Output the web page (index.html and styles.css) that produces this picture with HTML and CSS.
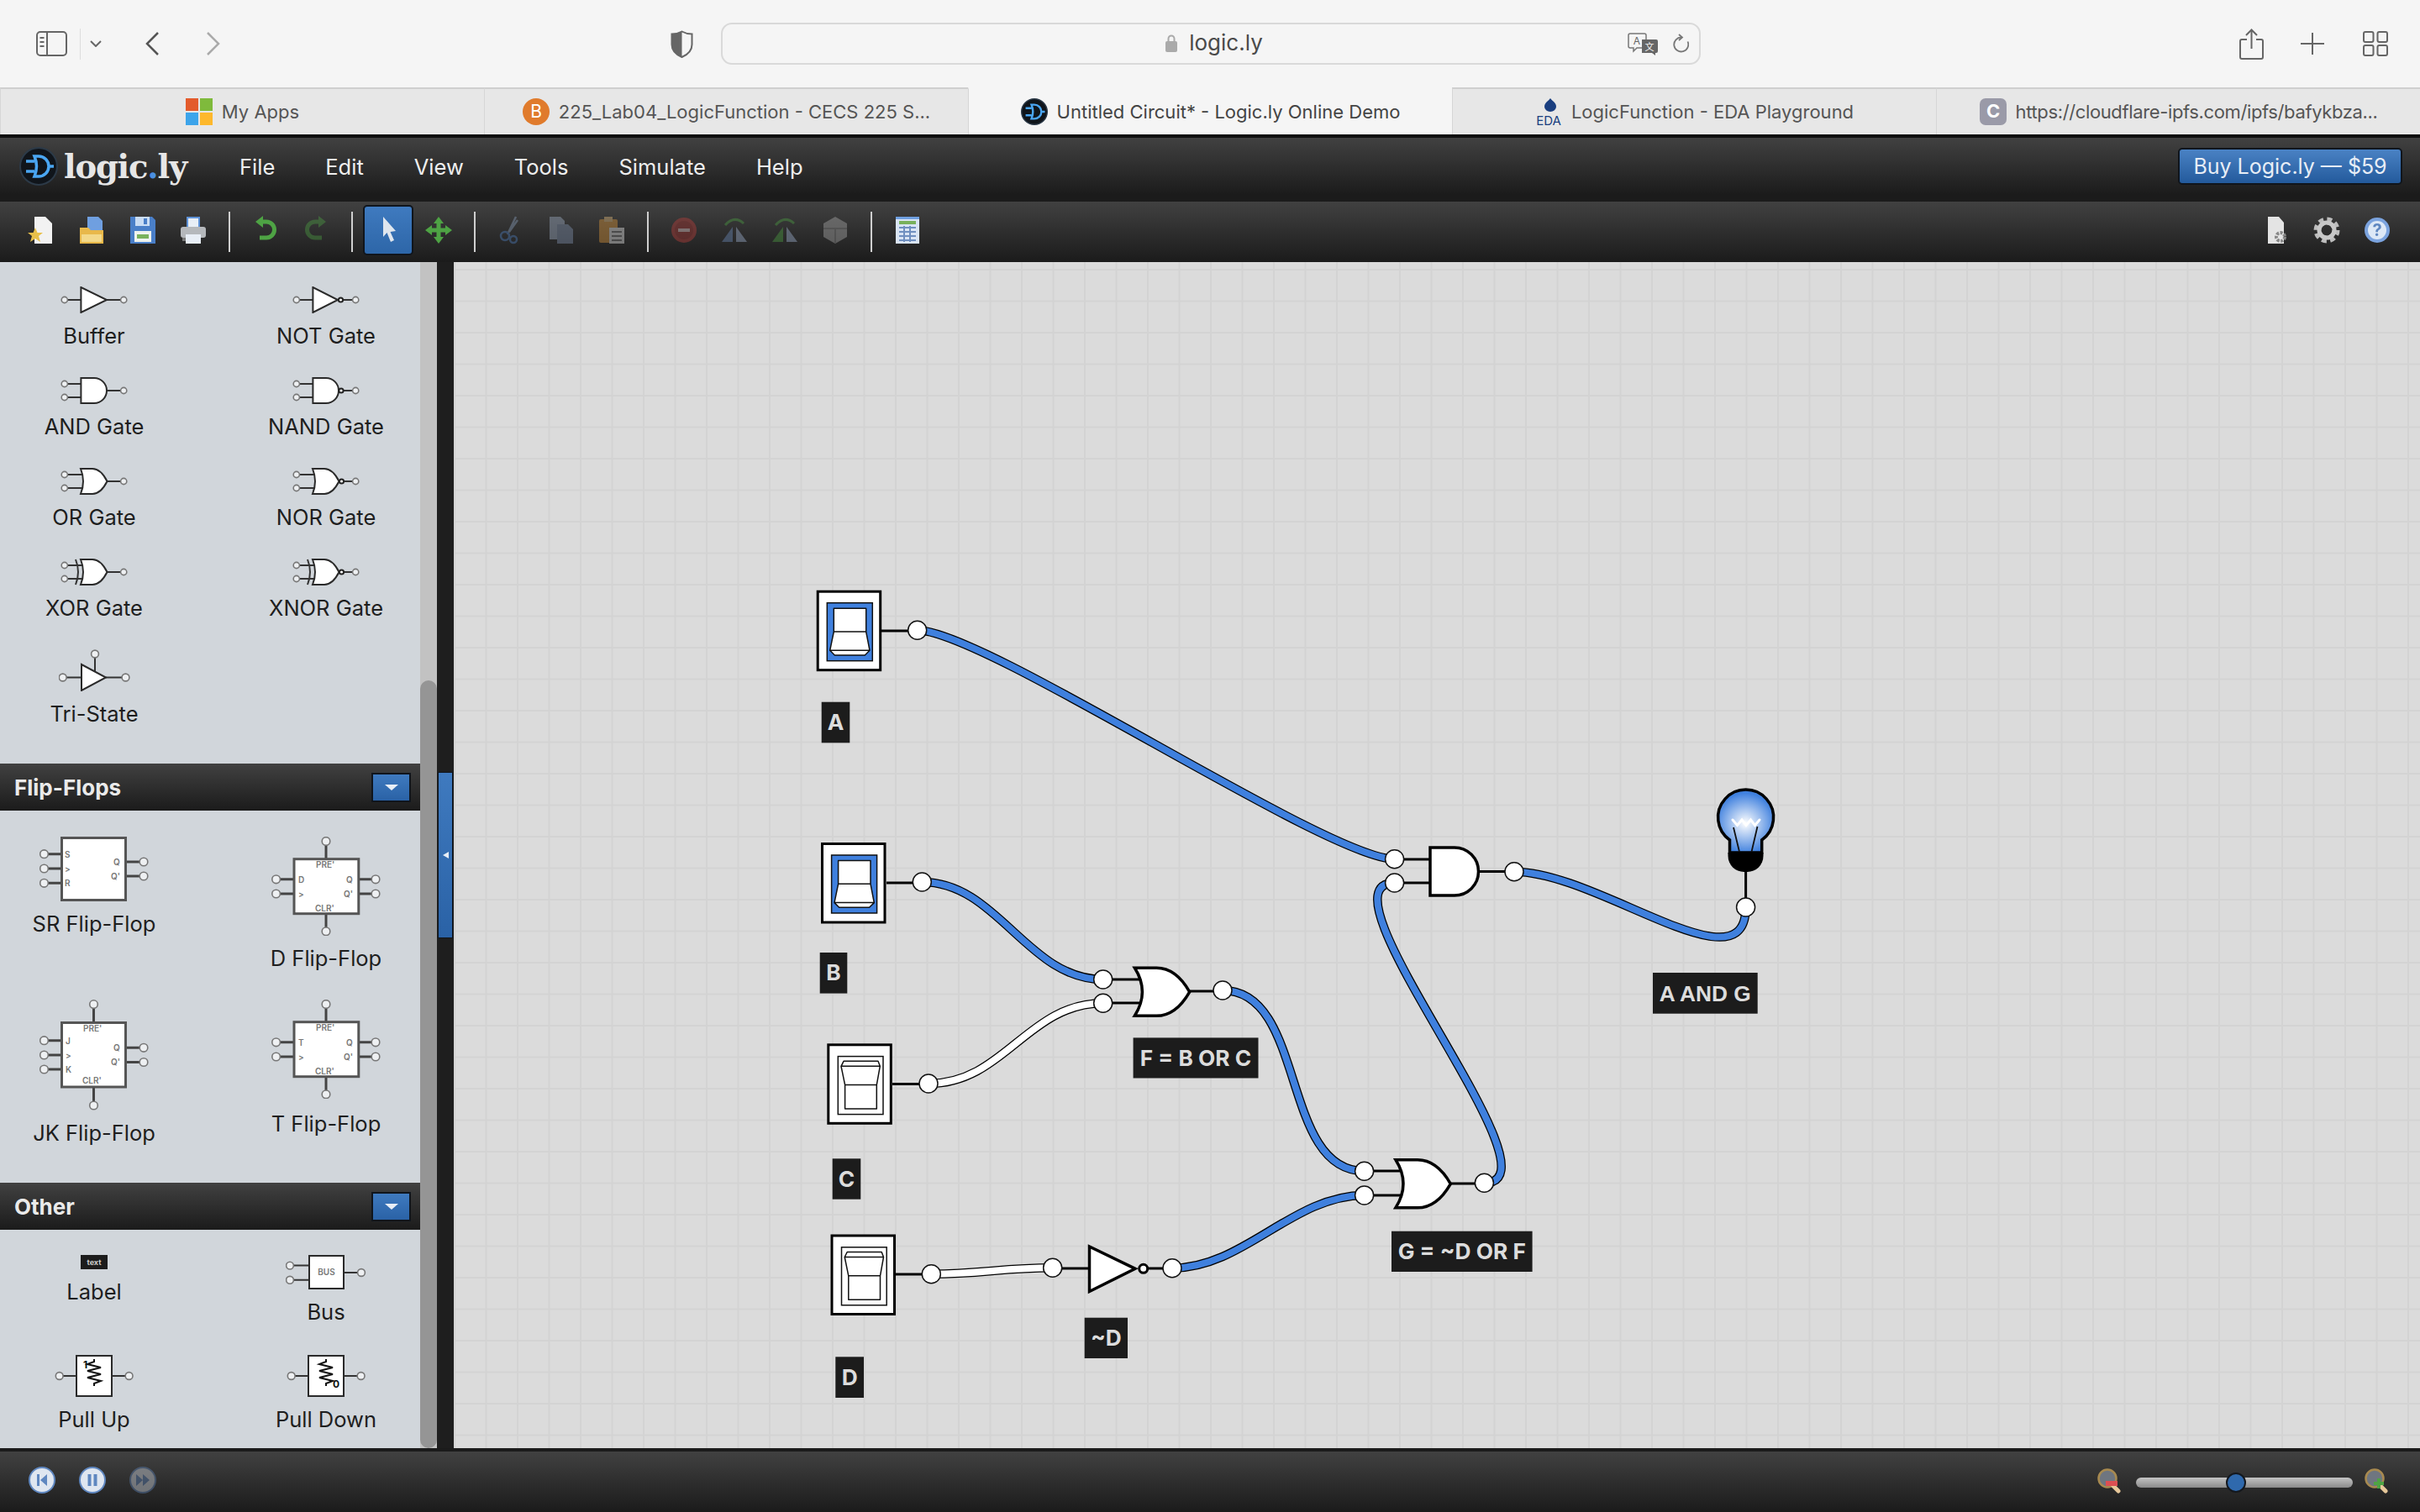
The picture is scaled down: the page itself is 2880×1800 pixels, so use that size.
FILE: index.html
```html
<!DOCTYPE html>
<html lang="en">
<head>
    <meta charset="UTF-8">
    <title>Untitled Circuit* - Logic.ly Online Demo</title>
    <link rel="stylesheet" href="styles.css">
</head>
<body>
    <svg class="defs" width="0" height="0" aria-hidden="true">
        <defs>
            <symbol id="logo-mark" viewBox="0 0 46 46">
                <circle cx="23" cy="23" r="22" fill="#10151b" stroke="#2c3a48" stroke-width="2"/>
                <path d="M8 17h10M8 29h10M18 11h5a12 12 0 0 1 0 24h-5q5-12 0-24zM35 23h6" fill="none" stroke="#4aa6f2" stroke-width="3.5"/>
            </symbol>

            <!-- palette gates -->
            <symbol id="p-buffer" viewBox="0 0 80 32">
                <path class="p-line" d="M8 16h17M55 16h16"/>
                <polygon class="p-body" points="24.4,1 24.4,31 55,16"/>
                <circle class="p-node" cx="4.8" cy="16" r="3.6"/><circle class="p-node" cx="75.2" cy="16" r="3.6"/>
            </symbol>
            <symbol id="p-not" viewBox="0 0 80 32">
                <path class="p-line" d="M8 16h17M60 16h11"/>
                <polygon class="p-body" points="24.4,1 24.4,31 54,16"/>
                <circle class="p-bub" cx="57.5" cy="16" r="2.6"/>
                <circle class="p-node" cx="4.8" cy="16" r="3.6"/><circle class="p-node" cx="75.2" cy="16" r="3.6"/>
            </symbol>
            <symbol id="p-and" viewBox="0 0 80 32">
                <path class="p-line" d="M8 8h17M8 24h17M55 16h16"/>
                <path class="p-body" d="M24.4 1H40a15 15 0 0 1 0 30H24.4z"/>
                <circle class="p-node" cx="4.8" cy="8" r="3.6"/><circle class="p-node" cx="4.8" cy="24" r="3.6"/><circle class="p-node" cx="75.2" cy="16" r="3.6"/>
            </symbol>
            <symbol id="p-nand" viewBox="0 0 80 32">
                <path class="p-line" d="M8 8h17M8 24h17M60 16h11"/>
                <path class="p-body" d="M24.4 1H40a15 15 0 0 1 0 30H24.4z"/>
                <circle class="p-bub" cx="58" cy="16" r="2.6"/>
                <circle class="p-node" cx="4.8" cy="8" r="3.6"/><circle class="p-node" cx="4.8" cy="24" r="3.6"/><circle class="p-node" cx="75.2" cy="16" r="3.6"/>
            </symbol>
            <symbol id="p-or" viewBox="0 0 80 32">
                <path class="p-line" d="M8 8h19M8 24h19M55 16h16"/>
                <path class="p-body" d="M24 1H38C46 1 52 9 55.5 16 52 23 46 31 38 31H24Q30 16 24 1z"/>
                <circle class="p-node" cx="4.8" cy="8" r="3.6"/><circle class="p-node" cx="4.8" cy="24" r="3.6"/><circle class="p-node" cx="75.2" cy="16" r="3.6"/>
            </symbol>
            <symbol id="p-nor" viewBox="0 0 80 32">
                <path class="p-line" d="M8 8h19M8 24h19M60 16h11"/>
                <path class="p-body" d="M24 1H38C46 1 52 9 55.5 16 52 23 46 31 38 31H24Q30 16 24 1z"/>
                <circle class="p-bub" cx="58.5" cy="16" r="2.6"/>
                <circle class="p-node" cx="4.8" cy="8" r="3.6"/><circle class="p-node" cx="4.8" cy="24" r="3.6"/><circle class="p-node" cx="75.2" cy="16" r="3.6"/>
            </symbol>
            <symbol id="p-xor" viewBox="0 0 80 32">
                <path class="p-line" d="M8 8h19M8 24h19M55 16h16M18 1Q24 16 18 31"/>
                <path class="p-body" d="M24 1H38C46 1 52 9 55.5 16 52 23 46 31 38 31H24Q30 16 24 1z"/>
                <circle class="p-node" cx="4.8" cy="8" r="3.6"/><circle class="p-node" cx="4.8" cy="24" r="3.6"/><circle class="p-node" cx="75.2" cy="16" r="3.6"/>
            </symbol>
            <symbol id="p-xnor" viewBox="0 0 80 32">
                <path class="p-line" d="M8 8h19M8 24h19M60 16h11M18 1Q24 16 18 31"/>
                <path class="p-body" d="M24 1H38C46 1 52 9 55.5 16 52 23 46 31 38 31H24Q30 16 24 1z"/>
                <circle class="p-bub" cx="58.5" cy="16" r="2.6"/>
                <circle class="p-node" cx="4.8" cy="8" r="3.6"/><circle class="p-node" cx="4.8" cy="24" r="3.6"/><circle class="p-node" cx="75.2" cy="16" r="3.6"/>
            </symbol>

            <!-- circuit parts -->
            <g id="gate-or"><path class="part" d="M0 0H26C45 0 57 14 65.3 28.5 57 43 45 57 26 57H0Q18 28.5 0 0z"/></g>
            <g id="gate-and"><path class="part" d="M0 0H29a28.5 28.5 0 0 1 0 57H0z"/></g>
            <g id="switch-on">
                <rect class="sw-frame" x="1.5" y="1.5" width="74.500" height="93.500"/>
                <rect class="sw-well-on" x="12.600" y="15" width="54" height="69"/>
                <path class="sw-paddle" d="M20.600 21.600H59V49.300H20.600zM20.600 49.300 16 71.600H63.300L59 49.300zM16 71.600l5.600 5.700H57.600l5.700-5.700z"/>
            </g>
            <g id="switch-off">
                <rect class="sw-frame" x="1.5" y="1.5" width="74.500" height="93.500"/>
                <rect class="sw-well-off" x="13" y="15.300" width="53.700" height="69"/>
                <path class="sw-paddle" d="M19.700 21H60.700L63 27H16.700zM16.700 27 21.300 49.300H59L63 27zM21.300 49.300H59V77.700H21.300z"/>
            </g>
        </defs>
    </svg>

    <header class="browser-bar">
        <svg class="bb-sidebar" viewBox="0 0 37 30"><rect x="1" y="1" width="35" height="28" rx="4" class="bb-stroke"/><path d="M13 1v28" class="bb-stroke"/><path d="M4.500 8h5M4.500 13h5M4.500 18h5" class="bb-stroke"/></svg>
        <span class="bb-divider"></span>
        <svg class="bb-chevron" viewBox="0 0 16 8"><path d="M2 1l6 6 6-6" class="bb-stroke"/></svg>
        <svg class="bb-back" viewBox="0 0 18 28"><path d="M16 1L3 14l13 13" class="bb-stroke-wide"/></svg>
        <svg class="bb-forward" viewBox="0 0 18 28"><path d="M2 1l13 13L2 27" class="bb-stroke-dim"/></svg>
        <svg class="bb-shield" viewBox="0 0 27 33"><path d="M13.500 1.500C9 4 5 4.500 1.500 4.500V17c0 7 5 12 12 15 7-3 12-8 12-15V4.500C22 4.500 18 4 13.500 1.500z" class="bb-stroke"/><path d="M13.500 1.500C9 4 5 4.500 1.500 4.500V17c0 7 5 12 12 15z" fill="#666"/></svg>
        <div class="address">
            <span></span>
            <div class="address-host">
                <svg class="lock" viewBox="0 0 14 22"><path d="M3.500 10V6a3.500 3.500 0 0 1 7 0v4" fill="none" stroke="#aaa" stroke-width="2"/><rect y="9" width="14" height="13" rx="2" fill="#aaa"/></svg>
                <span>logic.ly</span>
            </div>
            <div class="address-actions">
                <svg class="translate" viewBox="0 0 37 27"><path d="M3 1h17a2 2 0 0 1 2 2v13a2 2 0 0 1-2 2h-9l-4 4v-4H3a2 2 0 0 1-2-2V3a2 2 0 0 1 2-2z" fill="#f5f5f5" stroke="#777" stroke-width="1.500"/><path d="M17 8h17a2 2 0 0 1 2 2v12a2 2 0 0 1-2 2h-1v3l-4-3H17z" fill="#666"/><text x="11" y="14" class="translate-a">A</text><text x="26" y="21" class="translate-b">文</text></svg>
                <svg class="reload" viewBox="0 0 21 24"><path d="M12 4.500a8.500 8.500 0 1 0 7.500 5" fill="none" stroke="#777" stroke-width="1.800"/><path d="M9 1l4 3.500L9 8" fill="none" stroke="#777" stroke-width="1.800"/></svg>
            </div>
        </div>
        <svg class="bb-share" viewBox="0 0 29 37"><path d="M9 13H3a2 2 0 0 0-2 2v19a2 2 0 0 0 2 2h23a2 2 0 0 0 2-2V15a2 2 0 0 0-2-2h-6M14.500 24V2M8 8l6.500-6.500L21 8" class="bb-stroke"/></svg>
        <svg class="bb-plus" viewBox="0 0 28 26"><path d="M14 0v26M0 13h28" class="bb-stroke"/></svg>
        <svg class="bb-grid" viewBox="0 0 30 30"><rect x="1" y="1" width="11.500" height="12" rx="2" class="bb-stroke"/><rect x="17.500" y="1" width="11.500" height="12" rx="2" class="bb-stroke"/><rect x="1" y="17" width="11.500" height="12" rx="2" class="bb-stroke"/><rect x="17.500" y="17" width="11.500" height="12" rx="2" class="bb-stroke"/></svg>
    </header>

    <nav class="tabs">
        <div class="tab">
            <svg class="favicon" viewBox="0 0 32 32"><rect width="15" height="15" fill="#e35b2c"/><rect x="17" width="15" height="15" fill="#7fba3c"/><rect y="17" width="15" height="15" fill="#3da4ea"/><rect x="17" y="17" width="15" height="15" fill="#fdb82c"/></svg>
            <span>My Apps</span>
        </div>
        <div class="tab">
            <svg class="favicon" viewBox="0 0 32 32"><circle cx="16" cy="16" r="16" fill="#e07b2c"/><text x="16" y="23" class="favicon-b">B</text></svg>
            <span>225_Lab04_LogicFunction - CECS 225 S...</span>
        </div>
        <div class="tab tab-active">
            <svg class="favicon"><use href="#logo-mark"/></svg>
            <span>Untitled Circuit* - Logic.ly Online Demo</span>
        </div>
        <div class="tab">
            <svg class="favicon" viewBox="0 0 32 32"><path d="M18 0c2 3 7 5 7 10a7 6 0 0 1-14 0c0-5 5-7 7-10z" fill="#1a3f80"/><text x="16" y="32" class="favicon-eda">EDA</text></svg>
            <span>LogicFunction - EDA Playground</span>
        </div>
        <div class="tab tab-url">
            <svg class="favicon" viewBox="0 0 32 32"><rect width="32" height="32" rx="7" fill="#9a9aa8"/><text x="16" y="23" class="favicon-c">C</text></svg>
            <span>https://cloudflare-ipfs.com/ipfs/bafykbza...</span>
        </div>
    </nav>

    <div class="app-menu">
        <svg class="logo-mark"><use href="#logo-mark"/></svg>
        <span class="logo-text">logic<span class="logo-dot">.</span>ly</span>
        <ul class="menu">
            <li>File</li>
            <li>Edit</li>
            <li>View</li>
            <li>Tools</li>
            <li>Simulate</li>
            <li>Help</li>
        </ul>
        <button class="buy">Buy Logic.ly — $59</button>
    </div>

    <div class="app-toolbar">
        <div class="tool"><svg viewBox="0 0 32 32"><path d="M7 0h13l8 8v24H7z" fill="#f2f2f2"/><polygon points="8,13 10.500,19 17,19 12,23 14,30 8,26 2,30 4,23 -1,19 5.500,19" fill="#e8c04a"/></svg></div>
        <div class="tool"><svg viewBox="0 0 32 32"><path d="M10 0h13l5 5v18H10z" fill="#6f9fe0"/><path d="M1 13h10l3 3h15v16H1z" fill="#e8b84a"/><rect x="3" y="21" width="24" height="9" fill="#f3d98a"/></svg></div>
        <div class="tool"><svg viewBox="0 0 32 32"><path d="M1 0h26l4 4v28H1z" fill="#4a7fc8"/><rect x="7" y="0" width="17" height="11" fill="#c9dcf4"/><rect x="17" y="2" width="4" height="7" fill="#4a7fc8"/><rect x="6" y="17" width="20" height="13" fill="#eef2ee"/><rect x="9" y="21" width="14" height="5" fill="#79b15c"/></svg></div>
        <div class="tool"><svg viewBox="0 0 32 32"><rect x="8" y="0" width="16" height="14" fill="#5f93d8"/><rect x="10" y="2" width="12" height="12" fill="#e8eef6"/><rect x="1" y="12" width="30" height="13" rx="3" fill="#b5b8bc"/><rect x="7" y="21" width="18" height="11" fill="#e8eef6"/><rect x="3" y="25" width="4" height="4" fill="#777"/></svg></div>
        <span class="tool-sep"></span>
        <div class="tool"><svg viewBox="0 0 32 32"><path d="M11 6h6a8.500 8.500 0 0 1 0 19H9" fill="none" stroke="#4ea344" stroke-width="5"/><polygon points="13,-1 13,13 4,6" fill="#4ea344"/></svg></div>
        <div class="tool tool-off"><svg viewBox="0 0 32 32"><path d="M21 6h-6a8.500 8.500 0 0 0 0 19h8" fill="none" stroke="#4ea344" stroke-width="5"/><polygon points="19,-1 19,13 28,6" fill="#4ea344"/></svg></div>
        <span class="tool-sep"></span>
        <div class="tool tool-active"><svg viewBox="0 0 32 32"><polygon points="10,0 10,24 14.500,19 19,30 23,28 18.500,18 25,17" fill="#dfe6ee"/></svg></div>
        <div class="tool"><svg viewBox="0 0 32 32"><path d="M16 0l6 8h-3.500v5.500H24V10l8 6-8 6v-3.500h-5.500V24H22l-6 8-6-8h3.500v-5.500H8V22l-8-6 8-6v3.500h5.500V8H10z" fill="#4ea344"/></svg></div>
        <span class="tool-sep"></span>
        <div class="tool tool-off"><svg viewBox="0 0 32 32"><path d="M22 0L12 21M24 4L14 18" stroke="#8ea4c2" stroke-width="2.500" fill="none"/><circle cx="9" cy="23" r="5" fill="none" stroke="#4f81c4" stroke-width="2.500"/><circle cx="19" cy="27" r="4" fill="none" stroke="#4f81c4" stroke-width="2.500"/></svg></div>
        <div class="tool tool-off"><svg viewBox="0 0 32 32"><path d="M2 0h13l5 5v22H2z" fill="#a4b4cc"/><path d="M11 9h13l6 6v17H11z" fill="#8496b4"/></svg></div>
        <div class="tool tool-off"><svg viewBox="0 0 32 32"><rect x="1" y="3" width="22" height="28" rx="2" fill="#e09a3c"/><rect x="7" y="0" width="10" height="6" fill="#e8c080"/><rect x="13" y="13" width="18" height="19" fill="#f2f2f2"/><path d="M16 18h12M16 23h12M16 28h12" stroke="#777" stroke-width="2"/></svg></div>
        <span class="tool-sep"></span>
        <div class="tool tool-off"><svg viewBox="0 0 32 32"><circle cx="16" cy="16" r="15" fill="#c2403c"/><circle cx="16" cy="16" r="11" fill="#a83330"/><rect x="9" y="14" width="14" height="4" fill="#f0d0d0"/></svg></div>
        <div class="tool tool-off"><svg viewBox="0 0 32 32"><polygon points="14,12 14,30 1,30" fill="#6f8fc0"/><polygon points="18,12 18,30 31,30" fill="#a4b8d8"/><path d="M5 10Q16-2 27 8" fill="none" stroke="#4ea344" stroke-width="3"/></svg></div>
        <div class="tool tool-off"><svg viewBox="0 0 32 32"><polygon points="14,12 14,30 1,30" fill="#4ea344"/><polygon points="18,12 18,30 31,30" fill="#a4b8d8"/><path d="M5 10Q16-2 27 8" fill="none" stroke="#4ea344" stroke-width="3"/></svg></div>
        <div class="tool tool-off"><svg viewBox="0 0 32 32"><polygon points="16,0 30,8 30,24 16,32 2,24 2,8" fill="#b0b0b0"/><path d="M2 14h28M16 14v18" stroke="#8a8a8a" stroke-width="2"/></svg></div>
        <span class="tool-sep"></span>
        <div class="tool"><svg viewBox="0 0 32 32"><rect x="2" y="0" width="28" height="32" fill="#d9e4f4"/><rect x="2" y="0" width="28" height="3" fill="#6f9fe0"/><rect x="6" y="5" width="20" height="4" fill="#79b15c"/><path d="M6 13h20M6 18h20M6 23h20M6 28h20M12 11v19M19 11v19" stroke="#6f8fc0" stroke-width="2"/></svg></div>
        <div class="tool-right">
            <div class="tool"><svg viewBox="0 0 32 32"><path d="M6 0h13l6 7v25H6z" fill="#e4e4e4"/><circle cx="21" cy="24" r="5" fill="none" stroke="#888" stroke-width="4" stroke-dasharray="3 1.500"/></svg></div>
            <div class="tool"><svg viewBox="0 0 32 32"><circle cx="16" cy="16" r="11" fill="none" stroke="#bdbdbd" stroke-width="9" stroke-dasharray="5 3.640"/><circle cx="16" cy="16" r="9" fill="none" stroke="#c8c8c8" stroke-width="5"/></svg></div>
            <div class="tool"><svg viewBox="0 0 32 32"><circle cx="16" cy="16" r="15" fill="#7ba3de"/><circle cx="16" cy="16" r="11" fill="#dde8f6"/><text x="16" y="23" class="help-mark">?</text></svg></div>
        </div>
    </div>

    <div class="workspace">
        <aside class="sidebar">
            <div class="palette palette-gates">
                <div class="item"><svg class="ic-gate"><use href="#p-buffer"/></svg><span>Buffer</span></div>
                <div class="item"><svg class="ic-gate"><use href="#p-not"/></svg><span>NOT Gate</span></div>
                <div class="item"><svg class="ic-gate"><use href="#p-and"/></svg><span>AND Gate</span></div>
                <div class="item"><svg class="ic-gate"><use href="#p-nand"/></svg><span>NAND Gate</span></div>
                <div class="item"><svg class="ic-gate"><use href="#p-or"/></svg><span>OR Gate</span></div>
                <div class="item"><svg class="ic-gate"><use href="#p-nor"/></svg><span>NOR Gate</span></div>
                <div class="item"><svg class="ic-gate"><use href="#p-xor"/></svg><span>XOR Gate</span></div>
                <div class="item"><svg class="ic-gate"><use href="#p-xnor"/></svg><span>XNOR Gate</span></div>
                <div class="item">
                    <svg class="ic-tri" viewBox="0 0 85 50">
                        <path class="p-line" d="M9 33.500h18M56 33.500h19M43 10v16"/>
                        <polygon class="p-body" points="27,18 27,49 56,33.500"/>
                        <circle class="p-node" cx="4.700" cy="33.500" r="4.400"/><circle class="p-node" cx="79.500" cy="33.500" r="4.400"/><circle class="p-node" cx="43" cy="5.500" r="4.400"/>
                    </svg>
                    <span>Tri-State</span>
                </div>
            </div>

            <div class="section-head"><span>Flip-Flops</span><span class="drop"><i></i></span></div>
            <div class="palette palette-flip">
                <div class="item">
                    <svg class="ic-sr" viewBox="0 0 130 77">
                        <path class="p-line" d="M10 20.700h17M10 38h17M10 55.300h17M102 30h17M102 47h17"/>
                        <rect class="p-body" x="26.500" y="1.500" width="76" height="74"/>
                        <text class="p-tiny" x="30" y="25">S</text><text class="p-tiny" x="30" y="42">&gt;</text><text class="p-tiny" x="30" y="59">R</text>
                        <text class="p-tiny" x="88" y="34">Q</text><text class="p-tiny" x="85" y="51">Q'</text>
                        <circle class="p-node" cx="5.500" cy="20.700" r="4.800"/><circle class="p-node" cx="5.500" cy="38" r="4.800"/><circle class="p-node" cx="5.500" cy="55.300" r="4.800"/>
                        <circle class="p-node" cx="124" cy="30" r="4.800"/><circle class="p-node" cx="124" cy="47" r="4.800"/>
                    </svg>
                    <span>SR Flip-Flop</span>
                </div>
                <div class="item">
                    <svg class="ic-dt" viewBox="0 0 130 118">
                        <path class="p-line" d="M10 50.800h17M10 68h17M103 50.800h17M103 68h17M65 10v17M65 91v17"/>
                        <rect class="p-body" x="27" y="26.700" width="76.800" height="65"/>
                        <text class="p-tiny" x="32" y="55">D</text><text class="p-tiny" x="32" y="72">&gt;</text>
                        <text class="p-tiny" x="89" y="55">Q</text><text class="p-tiny" x="86" y="72">Q'</text>
                        <text class="p-tiny" x="53" y="37">PRE'</text><text class="p-tiny" x="52" y="89">CLR'</text>
                        <circle class="p-node" cx="5.600" cy="50.800" r="4.800"/><circle class="p-node" cx="5.600" cy="68" r="4.800"/><circle class="p-node" cx="124" cy="50.800" r="4.800"/><circle class="p-node" cx="124" cy="68" r="4.800"/><circle class="p-node" cx="65" cy="5.500" r="4.800"/><circle class="p-node" cx="65" cy="112.800" r="4.800"/>
                    </svg>
                    <span>D Flip-Flop</span>
                </div>
                <div class="item">
                    <svg class="ic-jk" viewBox="0 0 130 132">
                        <path class="p-line" d="M10 48.700h17M10 66h17M10 83h17M102 57.300h17M102 74.500h17M64.500 10v18M64.500 104v17"/>
                        <rect class="p-body" x="26.500" y="27.500" width="76" height="76.500"/>
                        <text class="p-tiny" x="31" y="53">J</text><text class="p-tiny" x="31" y="70">&gt;</text><text class="p-tiny" x="31" y="87">K</text>
                        <text class="p-tiny" x="88" y="61">Q</text><text class="p-tiny" x="85" y="78">Q'</text>
                        <text class="p-tiny" x="52" y="38">PRE'</text><text class="p-tiny" x="51" y="100">CLR'</text>
                        <circle class="p-node" cx="5.500" cy="48.700" r="4.800"/><circle class="p-node" cx="5.500" cy="66" r="4.800"/><circle class="p-node" cx="5.500" cy="83" r="4.800"/><circle class="p-node" cx="124" cy="57.300" r="4.800"/><circle class="p-node" cx="124" cy="74.500" r="4.800"/><circle class="p-node" cx="64.500" cy="5.600" r="4.800"/><circle class="p-node" cx="64.500" cy="126" r="4.800"/>
                    </svg>
                    <span>JK Flip-Flop</span>
                </div>
                <div class="item">
                    <svg class="ic-dt ic-t" viewBox="0 0 130 118">
                        <path class="p-line" d="M10 50.800h17M10 68h17M103 50.800h17M103 68h17M65 10v17M65 91v17"/>
                        <rect class="p-body" x="27" y="26.700" width="76.800" height="65"/>
                        <text class="p-tiny" x="32" y="55">T</text><text class="p-tiny" x="32" y="72">&gt;</text>
                        <text class="p-tiny" x="89" y="55">Q</text><text class="p-tiny" x="86" y="72">Q'</text>
                        <text class="p-tiny" x="53" y="37">PRE'</text><text class="p-tiny" x="52" y="89">CLR'</text>
                        <circle class="p-node" cx="5.600" cy="50.800" r="4.800"/><circle class="p-node" cx="5.600" cy="68" r="4.800"/><circle class="p-node" cx="124" cy="50.800" r="4.800"/><circle class="p-node" cx="124" cy="68" r="4.800"/><circle class="p-node" cx="65" cy="5.500" r="4.800"/><circle class="p-node" cx="65" cy="112.800" r="4.800"/>
                    </svg>
                    <span>T Flip-Flop</span>
                </div>
            </div>

            <div class="section-head"><span>Other</span><span class="drop"><i></i></span></div>
            <div class="palette palette-other">
                <div class="item">
                    <svg class="ic-label" viewBox="0 0 32 17"><rect width="32" height="17" fill="#1c1c1c"/><text x="16" y="11.500" class="label-tiny">text</text></svg>
                    <span>Label</span>
                </div>
                <div class="item">
                    <svg class="ic-bus" viewBox="0 0 96 41">
                        <path class="p-line" d="M9 12.600h19M9 29.800h19M69 21h17"/>
                        <rect class="p-body" x="28" y="1" width="41" height="39"/>
                        <text class="p-tiny" x="48.500" y="24" text-anchor="middle">BUS</text>
                        <circle class="p-node" cx="5" cy="12.600" r="4.400"/><circle class="p-node" cx="5" cy="29.800" r="4.400"/><circle class="p-node" cx="90" cy="21" r="4.400"/>
                    </svg>
                    <span>Bus</span>
                </div>
                <div class="item">
                    <svg class="ic-pull" viewBox="0 0 94 50">
                        <path class="p-line" d="M10 25h16M68 25h16"/>
                        <rect class="p-body" x="26" y="1" width="42" height="48"/>
                        <path d="M47 5v3l-8 3 16 4-16 4 16 4-16 4 16 4-8 3v3" fill="none" stroke="#111" stroke-width="2"/>
                        <text class="pull-digit" x="34" y="16">1</text>
                        <circle class="p-node" cx="5.700" cy="25" r="4.400"/><circle class="p-node" cx="88.600" cy="25" r="4.400"/>
                    </svg>
                    <span>Pull Up</span>
                </div>
                <div class="item">
                    <svg class="ic-pull" viewBox="0 0 94 50">
                        <path class="p-line" d="M10 25h16M68 25h16"/>
                        <rect class="p-body" x="26" y="1" width="42" height="48"/>
                        <path d="M47 5v3l-8 3 16 4-16 4 16 4-16 4 16 4-8 3v3" fill="none" stroke="#111" stroke-width="2"/>
                        <text class="pull-digit" x="55" y="39">0</text>
                        <circle class="p-node" cx="5.700" cy="25" r="4.400"/><circle class="p-node" cx="88.600" cy="25" r="4.400"/>
                    </svg>
                    <span>Pull Down</span>
                </div>
            </div>
        </aside>

        <div class="scrollbar"><div class="scroll-thumb"></div></div>
        <div class="splitter"><div class="split-handle"><i></i></div></div>

        <main class="canvas">
            <svg class="circuit" viewBox="540 312 2340 1412">
                <defs>
                    <radialGradient id="bulb-glow" gradientUnits="userSpaceOnUse" cx="2077" cy="980" r="36">
                        <stop offset="0" stop-color="#ffffff"/>
                        <stop offset="1" stop-color="#3f80de"/>
                    </radialGradient>
                </defs>

                <!-- wires -->
                <path class="wire-edge" d="M1091.700 750.300C1171.700 750.300 1579.600 1022.700 1659.600 1022.700"/>
                <path class="wire-on" d="M1091.700 750.300C1171.700 750.300 1579.600 1022.700 1659.600 1022.700"/>
                <path class="wire-edge" d="M1097.300 1050C1187.300 1050 1222.700 1166 1312.700 1166"/>
                <path class="wire-on" d="M1097.300 1050C1187.300 1050 1222.700 1166 1312.700 1166"/>
                <path class="wire-edge" d="M1105 1290C1195 1290 1222.700 1194.300 1312.700 1194.300"/>
                <path class="wire-off" d="M1105 1290C1195 1290 1222.700 1194.300 1312.700 1194.300"/>
                <path class="wire-edge" d="M1108.300 1516.700C1168.300 1516.700 1192.700 1509.300 1252.700 1509.300"/>
                <path class="wire-off" d="M1108.300 1516.700C1168.300 1516.700 1192.700 1509.300 1252.700 1509.300"/>
                <path class="wire-edge" d="M1395 1509.700C1480 1509.700 1538.600 1422.900 1623.600 1422.900"/>
                <path class="wire-on" d="M1395 1509.700C1480 1509.700 1538.600 1422.900 1623.600 1422.900"/>
                <path class="wire-edge" d="M1455 1179C1555 1179 1523.600 1394.200 1623.600 1394.200"/>
                <path class="wire-on" d="M1455 1179C1555 1179 1523.600 1394.200 1623.600 1394.200"/>
                <path class="wire-edge" d="M1766.400 1408.300C1866.400 1408.300 1559.600 1051 1659.600 1051"/>
                <path class="wire-on" d="M1766.400 1408.300C1866.400 1408.300 1559.600 1051 1659.600 1051"/>
                <path class="wire-edge" d="M1802 1037.700C1902 1037.700 2077.600 1180 2077.600 1080"/>
                <path class="wire-on" d="M1802 1037.700C1902 1037.700 2077.600 1180 2077.600 1080"/>

                <!-- stubs -->
                <path class="stub" d="M1049 751H1091M1055 1051H1097M1312 1166H1362M1312 1194H1362M1062 1290.500H1105M1066 1517H1108M1252 1510H1296M1365 1510H1395M1415 1180H1455M1623 1394H1672M1623 1423H1672M1727 1409H1766M1659 1023H1703M1659 1051H1703M1759 1037.500H1802M2077.600 1037V1080"/>

                <!-- switches -->
                <use href="#switch-on" x="971.700" y="702.700"/>
                <use href="#switch-on" x="977" y="1003"/>
                <use href="#switch-off" x="984.300" y="1242.300"/>
                <use href="#switch-off" x="988.500" y="1469.500"/>

                <!-- gates -->
                <use href="#gate-or" x="1350.400" y="1152.300"/>
                <use href="#gate-or" x="1661" y="1380.800"/>
                <use href="#gate-and" x="1702" y="1009"/>
                <polygon class="part" points="1296.500,1484 1296.500,1537.500 1351,1510.300"/>
                <circle class="bubble" cx="1360.700" cy="1510.300" r="5"/>

                <!-- bulb -->
                <path class="bulb-glass" d="M2058.500 1015V1000A33 33 0 1 1 2096.700 1000V1015z"/>
                <path class="bulb-base" d="M2056.500 1015H2098.500V1019A19 19 0 0 1 2079.500 1038H2075.500A19 19 0 0 1 2056.500 1019z"/>
                <path class="bulb-leg" d="M2063 985L2070 1014M2091.500 984L2084.500 1014"/>
                <path class="bulb-fil" d="M2062 976L2067.500 982.500 2073 976 2078 982.500 2083.500 976 2088.500 982.500 2094 976"/>

                <!-- nodes -->
                <circle class="node" cx="1091.700" cy="750.300" r="11"/>
                <circle class="node" cx="1097.300" cy="1050" r="11"/>
                <circle class="node" cx="1105" cy="1290" r="11"/>
                <circle class="node" cx="1108.300" cy="1516.700" r="11"/>
                <circle class="node" cx="1252.700" cy="1509.300" r="11"/>
                <circle class="node" cx="1395" cy="1509.700" r="11"/>
                <circle class="node" cx="1312.700" cy="1166" r="11"/>
                <circle class="node" cx="1312.700" cy="1194.300" r="11"/>
                <circle class="node" cx="1455" cy="1179" r="11"/>
                <circle class="node" cx="1623.600" cy="1394.200" r="11"/>
                <circle class="node" cx="1623.600" cy="1422.900" r="11"/>
                <circle class="node" cx="1766.400" cy="1408.300" r="11"/>
                <circle class="node" cx="1659.600" cy="1022.700" r="11"/>
                <circle class="node" cx="1659.600" cy="1051" r="11"/>
                <circle class="node" cx="1802" cy="1037.700" r="11"/>
                <circle class="node" cx="2077.600" cy="1080" r="11"/>

                <!-- labels -->
                <rect class="tag" x="977.700" y="835.700" width="33.600" height="48.600"/><text class="tag-text" x="994.500" y="869">A</text>
                <rect class="tag" x="975.700" y="1134" width="32.600" height="48.600"/><text class="tag-text" x="992" y="1167">B</text>
                <rect class="tag" x="990.700" y="1379.300" width="33.600" height="48.400"/><text class="tag-text" x="1007.500" y="1412.500">C</text>
                <rect class="tag" x="994.300" y="1615.300" width="33.700" height="48.700"/><text class="tag-text" x="1011.200" y="1648.500">D</text>
                <rect class="tag" x="1290.700" y="1568.700" width="51.300" height="48.300"/><text class="tag-text" x="1316.300" y="1602">~D</text>
                <rect class="tag" x="1348.600" y="1235.400" width="148.900" height="48.100"/><text class="tag-text" x="1423" y="1268.500">F = B OR C</text>
                <rect class="tag" x="1656" y="1465.700" width="167.600" height="48.300"/><text class="tag-text" x="1739.800" y="1499">G = ~D OR F</text>
                <rect class="tag" x="1967" y="1158" width="124.700" height="48.700"/><text class="tag-text tag-arial" x="2029.300" y="1191.500">A AND G</text>
            </svg>
        </main>
    </div>

    <footer class="statusbar">
        <div class="transport">
            <svg class="round-btn" viewBox="0 0 32 32"><circle cx="16" cy="16" r="15" fill="#dfe6f0" stroke="#5f87c0" stroke-width="2"/><path d="M10 9h3v14h-3zM22 9v14l-8-7z" fill="#5f87c0"/></svg>
            <svg class="round-btn" viewBox="0 0 32 32"><circle cx="16" cy="16" r="15" fill="#dfe6f0" stroke="#5f87c0" stroke-width="2"/><path d="M10.500 9h4v14h-4zM17.500 9h4v14h-4z" fill="#5f87c0"/></svg>
            <svg class="round-btn round-off" viewBox="0 0 32 32"><circle cx="16" cy="16" r="15" fill="#dfe6f0" stroke="#5f87c0" stroke-width="2"/><path d="M8 9l8 7-8 7zM16 9l8 7-8 7z" fill="#5f87c0"/></svg>
        </div>
        <div class="zoom">
            <svg class="mag" viewBox="0 0 30 30"><circle cx="12" cy="12" r="10.500" fill="#6f7680" stroke="#a88a50" stroke-width="2.500"/><path d="M19 21l6 6" stroke="#e6c79a" stroke-width="5" stroke-linecap="round"/><rect x="10" y="15" width="14" height="6" fill="#dc4f52"/></svg>
            <div class="track"><div class="thumb"></div></div>
            <svg class="mag mag-plus" viewBox="0 0 30 30"><circle cx="12" cy="12" r="10.500" fill="#6f7680" stroke="#a88a50" stroke-width="2.500"/><path d="M19 21l6 6" stroke="#e6c79a" stroke-width="5" stroke-linecap="round"/><path d="M17 12v12M11 18h12" stroke="#4ea344" stroke-width="4"/></svg>
        </div>
    </footer>
</body>
</html>
```

FILE: styles.css
```css
* {
    box-sizing: border-box;
}
html, body {
    height: 100%;
}
body {
    margin: 0;
    width: 2880px;
    height: 1800px;
    display: flex;
    flex-direction: column;
    overflow: hidden;
    font-family: Inter, "Liberation Sans", sans-serif;
    background-color: #1b1b1b;
}
.defs {
    position: absolute;
}

/* browser chrome */
.browser-bar {
    height: 104px;
    flex: none;
    display: flex;
    align-items: center;
    background-color: #f5f5f5;
}
.bb-stroke {
    fill: none;
    stroke: #666;
    stroke-width: 2;
}
.bb-stroke-wide {
    fill: none;
    stroke: #555;
    stroke-width: 2.5;
}
.bb-stroke-dim {
    fill: none;
    stroke: #aaa;
    stroke-width: 2.5;
}
.bb-sidebar {
    width: 37px;
    height: 30px;
    margin-left: 43px;
}
.bb-divider {
    width: 1px;
    height: 37px;
    margin-left: 15px;
    background-color: #ddd;
}
.bb-chevron {
    width: 16px;
    height: 8px;
    margin-left: 10px;
}
.bb-back {
    width: 18px;
    height: 28px;
    margin-left: 50px;
}
.bb-forward {
    width: 18px;
    height: 28px;
    margin-left: 55px;
}
.bb-shield {
    width: 27px;
    height: 33px;
    margin-left: 535px;
}
.address {
    width: 1166px;
    height: 50px;
    margin-left: 33px;
    display: grid;
    grid-template-columns: 1fr auto 1fr;
    align-items: center;
    background-color: #f5f5f5;
    border: 2px solid #d9d9d9;
    border-radius: 13px;
    padding: 0 12px;
}
.address-host {
    display: flex;
    align-items: center;
    gap: 14px;
    margin: 0 0 3px 8px;
    font-size: 26px;
    color: #4a4a4a;
}
.lock {
    width: 14px;
    height: 22px;
}
.address-actions {
    display: flex;
    justify-content: flex-end;
    align-items: center;
    gap: 15px;
}
.translate {
    width: 37px;
    height: 27px;
}
.translate-a {
    font-size: 12px;
    fill: #666;
    text-anchor: middle;
}
.translate-b {
    font-size: 11px;
    fill: #f5f5f5;
    text-anchor: middle;
    font-family: "Noto Sans CJK SC", sans-serif;
}
.reload {
    width: 21px;
    height: 24px;
}
.bb-share {
    width: 29px;
    height: 37px;
    margin-left: 641px;
}
.bb-plus {
    width: 28px;
    height: 26px;
    margin-left: 44px;
}
.bb-grid {
    width: 30px;
    height: 30px;
    margin-left: 46px;
}

.tabs {
    height: 56px;
    flex: none;
    display: flex;
}
.tab {
    width: 576px;
    display: flex;
    justify-content: center;
    align-items: center;
    gap: 11px;
    font-size: 22px;
    color: #555;
    background-color: #e7e7e7;
    border-top: 2px solid #cfcfcf;
    border-left: 1px solid #d6d6d6;
}
.tab-active {
    background-color: #f5f5f5;
    border-top-color: #f5f5f5;
    color: #444;
}
.tab-url {
    letter-spacing: -0.37px;
}
.favicon {
    width: 32px;
    height: 32px;
    flex: none;
}
.favicon-b {
    font-size: 21px;
    fill: #fff;
    text-anchor: middle;
}
.favicon-c {
    font-size: 22px;
    font-weight: 700;
    fill: #fff;
    text-anchor: middle;
}
.favicon-eda {
    font-size: 15px;
    fill: #1a3f80;
    text-anchor: middle;
}

/* app bars */
.app-menu {
    height: 72px;
    flex: none;
    display: flex;
    align-items: center;
    border-top: 4px solid #0e0e0e;
    background-image: linear-gradient(#414141, #1b1b1b);
    padding: 0 21px 0 23px;
}
.logo-mark {
    width: 46px;
    height: 46px;
    flex: none;
}
.logo-text {
    width: 149px;
    flex: none;
    margin-left: 7px;
    font-family: "DejaVu Serif", serif;
    font-weight: 700;
    font-size: 38.5px;
    letter-spacing: -1.2px;
    color: #e6e6e6;
    white-space: nowrap;
}
.logo-dot {
    color: #4a8fe0;
}
.menu {
    list-style: none;
    margin: 0 0 0 60px;
    padding: 0;
    display: flex;
    gap: 60px;
    font-size: 25.5px;
    color: #eee;
}
.buy {
    margin-left: auto;
    width: 267px;
    height: 44px;
    padding: 0;
    font-family: Inter, sans-serif;
    font-size: 25px;
    color: #e8eef6;
    background-image: linear-gradient(#4a82c4, #235a9c);
    border: 2px solid #10151c;
    border-radius: 5px;
}

.app-toolbar {
    height: 80px;
    flex: none;
    display: flex;
    align-items: center;
    border-top: 8px solid #1b1b1b;
    background-image: linear-gradient(#414141, #1b1b1b);
    padding: 0 21px 4px 20px;
}
.tool {
    width: 60px;
    height: 60px;
    flex: none;
    display: flex;
    justify-content: center;
    align-items: center;
}
.tool svg {
    width: 32px;
    height: 32px;
    overflow: visible;
    filter: blur(0.6px);
}
.tool-off svg {
    opacity: 0.4;
}
.tool-active {
    background-image: linear-gradient(#3f7abf, #2d66a8);
    border: 2px solid #10151c;
    border-radius: 5px;
}
.tool-sep {
    width: 2px;
    height: 48px;
    flex: none;
    margin: 4px 12px 0;
    background-color: #cfcfcf;
}
.tool-right {
    margin-left: auto;
    display: flex;
}
.help-mark {
    font-size: 20px;
    font-weight: 700;
    fill: #5f87c0;
    text-anchor: middle;
}

/* workspace */
.workspace {
    flex: 1;
    display: flex;
    min-height: 0;
}
.sidebar {
    width: 500px;
    flex: none;
    overflow: hidden;
    background-color: #d1d6db;
}
.palette {
    display: grid;
    grid-template-columns: 220px 220px;
    column-gap: 56px;
    row-gap: 33px;
    align-items: start;
    padding-left: 2px;
}
.palette-gates {
    padding-top: 29px;
    padding-bottom: 43px;
}
.palette-flip {
    padding-top: 31px;
    padding-bottom: 43px;
}
.palette-other {
    padding-top: 30px;
    row-gap: 35px;
}
.item {
    display: flex;
    flex-direction: column;
    align-items: center;
    gap: 11px;
    font-size: 25.5px;
    line-height: 32px;
    color: #1e1e1e;
}
.item svg {
    display: block;
    flex: none;
}
.ic-gate {
    width: 80px;
    height: 32px;
}
.ic-tri {
    width: 85px;
    height: 50px;
}
.ic-sr {
    width: 130px;
    height: 77px;
}
.ic-dt {
    width: 130px;
    height: 118px;
}
.ic-t {
    margin-bottom: 3px;
}
.ic-jk {
    width: 130px;
    height: 132px;
}
.ic-label {
    width: 32px;
    height: 17px;
}
.ic-bus {
    width: 96px;
    height: 41px;
}
.ic-pull {
    width: 94px;
    height: 50px;
}
.p-line {
    fill: none;
    stroke: #333;
    stroke-width: 2;
}
.p-body {
    fill: #fff;
    stroke: #2a2a2a;
    stroke-width: 2;
}
.p-node {
    fill: #eef0f2;
    stroke: #777;
    stroke-width: 1.6;
}
.p-bub {
    fill: #fff;
    stroke: #222;
    stroke-width: 2;
}
.ic-sr .p-line, .ic-dt .p-line, .ic-jk .p-line {
    stroke: #444;
    stroke-width: 3;
}
.ic-sr .p-body, .ic-dt .p-body, .ic-jk .p-body {
    stroke: #555;
    stroke-width: 3;
}
.p-tiny {
    font-size: 10px;
    fill: #777;
    font-weight: 600;
}
.label-tiny {
    font-size: 9px;
    fill: #ccc;
    font-weight: 700;
    text-anchor: middle;
}
.pull-digit {
    font-size: 12px;
    font-weight: 700;
    fill: #111;
}

.section-head {
    height: 56px;
    display: flex;
    justify-content: space-between;
    align-items: center;
    padding: 0 11px 0 17px;
    font-size: 26px;
    font-weight: 700;
    color: #eaeaea;
    background-image: linear-gradient(#414141, #1b1b1b);
}
.drop {
    width: 47px;
    height: 35px;
    display: flex;
    justify-content: center;
    align-items: center;
    background-image: linear-gradient(#3f7abf, #2a62a6);
    border: 2px solid #10151c;
}
.drop i {
    width: 0;
    height: 0;
    border-left: 8px solid transparent;
    border-right: 8px solid transparent;
    border-top: 7px solid #e8eef6;
}

.scrollbar {
    width: 20px;
    flex: none;
    background-color: #c2c2c2;
}
.scroll-thumb {
    height: 914px;
    margin-top: 498px;
    border-radius: 10px;
    background-color: #959595;
}
.splitter {
    width: 20px;
    flex: none;
    background-color: #1e1e1e;
    padding: 607px 1px 0;
}
.split-handle {
    height: 198px;
    display: flex;
    justify-content: center;
    align-items: center;
    background-image: linear-gradient(#3f7abf, #2a62a6);
    border: 1px solid #10151c;
}
.split-handle i {
    width: 0;
    height: 0;
    border-top: 4px solid transparent;
    border-bottom: 4px solid transparent;
    border-right: 7px solid #e8eef6;
}

/* canvas */
.canvas {
    flex: 1;
    position: relative;
    overflow: hidden;
    background-color: #dbdbdb;
    background-image:
        linear-gradient(to right, #d3d3d3 2px, transparent 2px),
        linear-gradient(to bottom, #d3d3d3 2px, transparent 2px);
    background-size: 37.5px 37.5px;
    background-position: 0 8px;
}
.circuit {
    position: absolute;
    left: 0;
    top: 0;
    width: 2340px;
    height: 1412px;
}
.wire-edge {
    fill: none;
    stroke: #000;
    stroke-width: 10.5;
}
.wire-on {
    fill: none;
    stroke: #3f80de;
    stroke-width: 8;
}
.wire-off {
    fill: none;
    stroke: #fff;
    stroke-width: 8;
}
.stub {
    fill: none;
    stroke: #000;
    stroke-width: 3;
}
.node {
    fill: #fff;
    stroke: #111;
    stroke-width: 1.5;
}
.part {
    fill: #fff;
    stroke: #000;
    stroke-width: 3.5;
}
.bubble {
    fill: #fff;
    stroke: #000;
    stroke-width: 3;
}
.sw-frame {
    fill: #fff;
    stroke: #000;
    stroke-width: 3;
}
.sw-well-on {
    fill: #3f80de;
    stroke: #111;
    stroke-width: 1.5;
}
.sw-well-off {
    fill: #fff;
    stroke: #111;
    stroke-width: 1.5;
}
.sw-paddle {
    fill: #fff;
    stroke: #111;
    stroke-width: 1.5;
    stroke-linejoin: round;
}
.bulb-glass {
    fill: url(#bulb-glow);
    stroke: #000;
    stroke-width: 3.5;
}
.bulb-base {
    fill: #000;
}
.bulb-leg {
    fill: none;
    stroke: #111;
    stroke-width: 1.8;
}
.bulb-fil {
    fill: none;
    stroke: #fff;
    stroke-width: 3;
    stroke-linecap: round;
}
.tag {
    fill: #1c1c1c;
}
.tag-text {
    font-family: Inter, sans-serif;
    font-size: 26.3px;
    font-weight: 700;
    fill: #dcdcdc;
    text-anchor: middle;
}
.tag-arial {
    font-family: "Liberation Sans", sans-serif;
}

/* bottom bar */
.statusbar {
    height: 76px;
    flex: none;
    display: flex;
    justify-content: space-between;
    align-items: center;
    border-top: 4px solid #1b1b1b;
    background-image: linear-gradient(#414141, #1b1b1b);
    padding: 0 36px 0 34px;
}
.transport {
    display: flex;
    gap: 28px;
    margin-bottom: 4px;
}
.round-btn {
    width: 32px;
    height: 32px;
    filter: blur(0.6px);
}
.round-off {
    opacity: 0.4;
}
.zoom {
    display: flex;
    align-items: center;
    gap: 16px;
    margin-top: 1px;
}
.mag {
    width: 30px;
    height: 30px;
    margin-bottom: 3px;
}
.mag-plus {
    margin-left: -2px;
}
.track {
    width: 258px;
    height: 12px;
    display: flex;
    align-items: center;
    border-radius: 6px;
    background-image: linear-gradient(#c4c4c4, #8a8a8a);
    padding-left: 107px;
}
.thumb {
    width: 24px;
    height: 24px;
    flex: none;
    border-radius: 50%;
    background-color: #2f69ad;
    border: 2px solid #14181e;
}
```
